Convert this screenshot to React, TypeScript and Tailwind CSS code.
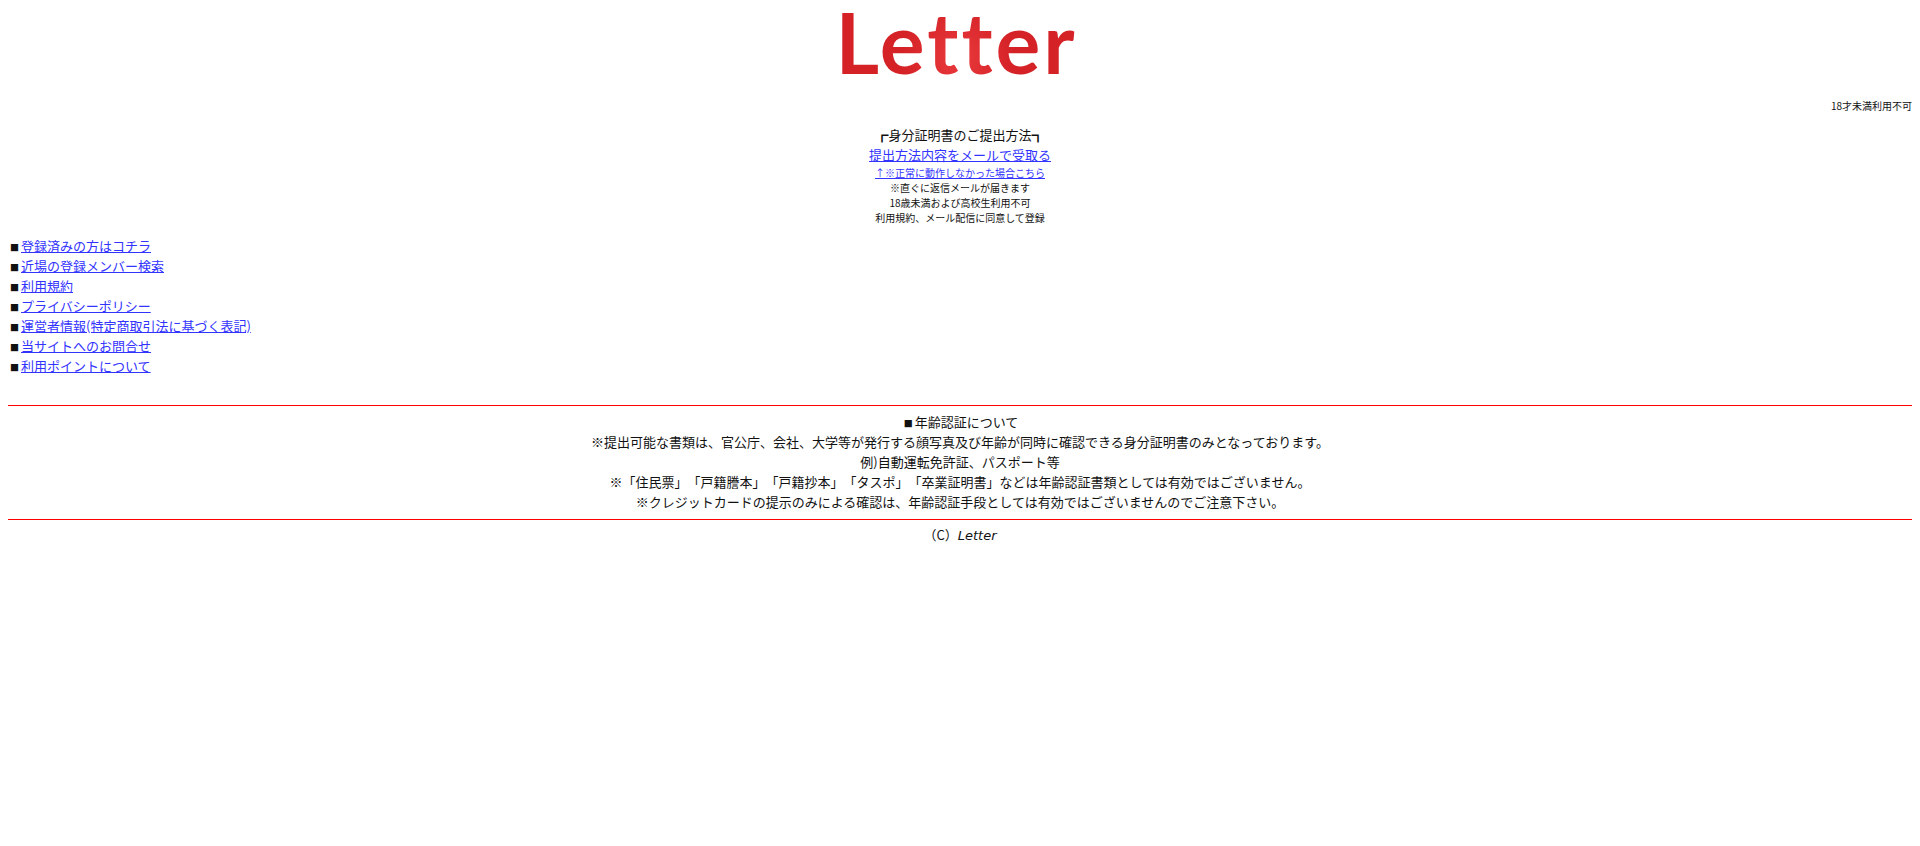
const jp = "font-['Noto_Sans_CJK_JP',sans-serif]";
const links = [
  "登録済みの方はコチラ",
  "近場の登録メンバー検索",
  "利用規約",
  "プライバシーポリシー",
  "運営者情報(特定商取引法に基づく表記)",
  "当サイトへのお問合せ",
  "利用ポイントについて",
];
const notes = [
  "※提出可能な書類は、官公庁、会社、大学等が発行する顔写真及び年齢が同時に確認できる身分証明書のみとなっております。",
  "例)自動運転免許証、パスポート等",
  "※「住民票」「戸籍謄本」「戸籍抄本」「タスポ」「卒業証明書」などは年齢認証書類としては有効ではございません。",
  "※クレジットカードの提示のみによる確認は、年齢認証手段としては有効ではございませんのでご注意下さい。",
];

function Square() {
  return <span className="inline-block w-[13px] text-center text-[9px] leading-none">■</span>;
}

export default function App() {
  return (
    <div className={`${jp} min-h-[846px] bg-white p-2 text-[13px] leading-5 text-[#111] [text-spacing-trim:space-all]`}>
      <div className="flex h-[90px] justify-center">
        <span className="-mt-[7px] mr-[4px] h-fit bg-[radial-gradient(circle_at_50%_70%,#ea3a3c_0%,#d42227_42%)] bg-clip-text pr-[3px] font-['Lato',sans-serif] text-[84px] leading-[81px] font-bold tracking-[3px] text-transparent">
          Letter
        </span>
      </div>
      <p className="text-right text-[10px] leading-[15px]">18才未満利用不可</p>
      <div className="mt-[12px] flex flex-col items-center">
        <p className="leading-[20px]">┏身分証明書のご提出方法┓</p>
        <a href="#" className="leading-[20px] text-[#3333ff] underline">提出方法内容をメールで受取る</a>
        <div className="flex flex-col items-center text-[10px] leading-[15px]">
          <a href="#" className="text-[#3333ff] underline">↑※正常に動作しなかった場合こちら</a>
          <p>※直ぐに返信メールが届きます</p>
          <p>18歳未満および高校生利用不可</p>
          <p>利用規約、メール配信に同意して登録</p>
        </div>
      </div>
      <ul className="mt-[11px] flex flex-col">
        {links.map((t) => (
          <li key={t}>
            <Square />
            <a href="#" className="text-[#3333ff] underline">{t}</a>
          </li>
        ))}
      </ul>
      <div className="mt-[29px] border-y border-[#ff0000] pt-[6px] pb-[7px] text-center">
        <p><Square />年齢認証について</p>
        {notes.map((t) => (
          <p key={t}>{t}</p>
        ))}
      </div>
      <p className="mt-[5px] text-center">
        （C）<span className="font-['DejaVu_Sans',sans-serif] italic">Letter</span>
      </p>
    </div>
  );
}
